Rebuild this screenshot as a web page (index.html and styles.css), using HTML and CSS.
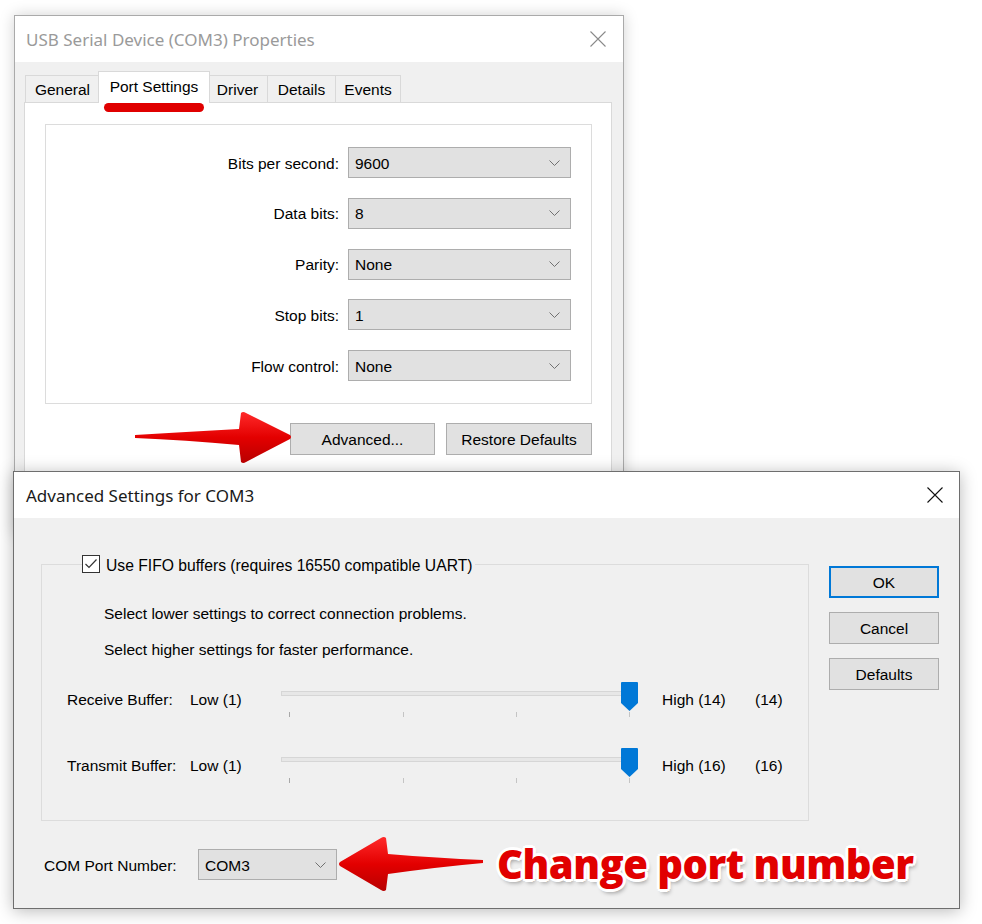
FILE: index.html
```html
<!DOCTYPE html>
<html>
<head>
<meta charset="utf-8">
<link rel="stylesheet" href="styles.css">
</head>
<body>
<div class="desktop">

  <div class="win win-back">
    <div class="titlebar">
      <span class="title title-inactive">USB Serial Device (COM3) Properties</span>
      <svg class="close" width="16" height="16" viewBox="0 0 16 16"><path d="M0.5 0.5 L15.5 15.5 M15.5 0.5 L0.5 15.5" stroke="#8a8a8a" stroke-width="1.1" fill="none"/></svg>
    </div>
    <div class="body1">
      <div class="tabs">
        <div class="tab t-general">General</div>
        <div class="tab t-port selected">Port Settings</div>
        <div class="tab t-driver">Driver</div>
        <div class="tab t-details">Details</div>
        <div class="tab t-events">Events</div>
      </div>
      <div class="panel">
        <div class="group1">
          <label class="lbl">Bits per second:</label>
          <div class="select"><span>9600</span><svg width="11" height="6" viewBox="0 0 11 6"><path d="M0.5 0.5 L5.5 5.5 L10.5 0.5" stroke="#707070" fill="none"/></svg></div>
          <label class="lbl">Data bits:</label>
          <div class="select"><span>8</span><svg width="11" height="6" viewBox="0 0 11 6"><path d="M0.5 0.5 L5.5 5.5 L10.5 0.5" stroke="#707070" fill="none"/></svg></div>
          <label class="lbl">Parity:</label>
          <div class="select"><span>None</span><svg width="11" height="6" viewBox="0 0 11 6"><path d="M0.5 0.5 L5.5 5.5 L10.5 0.5" stroke="#707070" fill="none"/></svg></div>
          <label class="lbl">Stop bits:</label>
          <div class="select"><span>1</span><svg width="11" height="6" viewBox="0 0 11 6"><path d="M0.5 0.5 L5.5 5.5 L10.5 0.5" stroke="#707070" fill="none"/></svg></div>
          <label class="lbl">Flow control:</label>
          <div class="select"><span>None</span><svg width="11" height="6" viewBox="0 0 11 6"><path d="M0.5 0.5 L5.5 5.5 L10.5 0.5" stroke="#707070" fill="none"/></svg></div>
        </div>
        <div class="btnrow">
          <div class="btn b-adv">Advanced...</div>
          <div class="btn b-restore">Restore Defaults</div>
        </div>
      </div>
    </div>
  </div>

  <div class="win win-front">
    <div class="titlebar">
      <span class="title">Advanced Settings for COM3</span>
      <svg class="close" width="16" height="16" viewBox="0 0 16 16"><path d="M0.5 0.5 L15.5 15.5 M15.5 0.5 L0.5 15.5" stroke="#111" stroke-width="1.1" fill="none"/></svg>
    </div>
    <div class="body2">
      <div class="leftcol">
        <fieldset class="fifo">
          <legend class="legend">
            <span class="checkbox"><svg width="18" height="18" viewBox="0 0 18 18"><rect x="0.5" y="0.5" width="17" height="17" fill="#fff" stroke="#333"/><path d="M3.5 9 L7 12.5 L14.5 4.5" stroke="#333" stroke-width="1.2" fill="none"/></svg></span>
            <span>Use FIFO buffers (requires 16550 compatible UART)</span>
          </legend>
          <p class="note n1">Select lower settings to correct connection problems.</p>
          <p class="note n2">Select higher settings for faster performance.</p>
          <div class="srow r1">
            <span class="s-lbl">Receive Buffer:</span>
            <span class="s-low">Low (1)</span>
            <div class="slider">
              <div class="track"></div>
              <i class="tick k1"></i><i class="tick k2"></i><i class="tick k3"></i><i class="tick k4"></i>
              <svg class="thumb" width="17" height="29" viewBox="0 0 17 29"><path d="M1 0 H16 Q17 0 17 1 V21 L8.5 29 L0 21 V1 Q0 0 1 0 Z" fill="#0078d7"/></svg>
            </div>
            <span class="s-high">High (14)</span>
            <span class="s-val">(14)</span>
          </div>
          <div class="srow r2">
            <span class="s-lbl">Transmit Buffer:</span>
            <span class="s-low">Low (1)</span>
            <div class="slider">
              <div class="track"></div>
              <i class="tick k1"></i><i class="tick k2"></i><i class="tick k3"></i><i class="tick k4"></i>
              <svg class="thumb" width="17" height="29" viewBox="0 0 17 29"><path d="M1 0 H16 Q17 0 17 1 V21 L8.5 29 L0 21 V1 Q0 0 1 0 Z" fill="#0078d7"/></svg>
            </div>
            <span class="s-high">High (16)</span>
            <span class="s-val">(16)</span>
          </div>
        </fieldset>
        <div class="comrow">
          <span class="com-lbl">COM Port Number:</span>
          <div class="select com"><span>COM3</span><svg width="11" height="6" viewBox="0 0 11 6"><path d="M0.5 0.5 L5.5 5.5 L10.5 0.5" stroke="#707070" fill="none"/></svg></div>
        </div>
      </div>
      <div class="rightcol">
        <div class="btn b2 ok">OK</div>
        <div class="btn b2">Cancel</div>
        <div class="btn b2">Defaults</div>
      </div>
    </div>
  </div>

  <div class="underline"></div>

  <svg class="arrow arrow1" width="160" height="54" viewBox="0 0 160 54">
    <defs>
      <linearGradient id="ag1" x1="0" y1="0" x2="0" y2="1">
        <stop offset="0" stop-color="#ff2a2a"/>
        <stop offset="0.5" stop-color="#e30000"/>
        <stop offset="1" stop-color="#b80000"/>
      </linearGradient>
    </defs>
    <path d="M0 24 Q50 21 104 18 L106 2 Q108 0 111 2 L155 24 Q157 26 155 28 L111 51 Q108 53 106 51 L104 34 Q50 29 0 27 Z" fill="url(#ag1)"/>
  </svg>

  <svg class="arrow arrow2" width="145" height="56" viewBox="0 0 145 56">
    <defs>
      <linearGradient id="ag2" x1="0" y1="0" x2="0" y2="1">
        <stop offset="0" stop-color="#ff2a2a"/>
        <stop offset="0.5" stop-color="#e30000"/>
        <stop offset="1" stop-color="#b80000"/>
      </linearGradient>
    </defs>
    <path d="M145 24 Q100 22 50 18 L48 2 Q46 0 43 2 L2 26 Q0 28 2 30 L43 54 Q46 56 48 54 L50 38 Q100 31 145 27 Z" fill="url(#ag2)"/>
  </svg>

  <div class="annot">Change port number</div>
</div>
</body>
</html>
```

FILE: styles.css
```css
* { box-sizing: border-box; }
html, body { margin: 0; padding: 0; background: #fff; }
body {
  font-family: "Liberation Sans", Arial, sans-serif;
  font-size: 15.5px;
  color: #000;
}
.desktop {
  position: relative;
  width: 982px;
  height: 924px;
  overflow: hidden;
  background: #fff;
}

/* windows */
.win {
  position: absolute;
  background: #f0f0f0;
  display: flex;
  flex-direction: column;
}
.win-back {
  left: 14px;
  top: 15px;
  width: 610px;
  height: 520px;
  border: 1px solid #aaaaaa;
  box-shadow: 0 0 14px rgba(0,0,0,0.18);
}
.win-front {
  left: 13px;
  top: 471px;
  width: 947px;
  height: 438px;
  border: 1px solid #6e6e6e;
  box-shadow: 0 2px 16px rgba(0,0,0,0.28);
}
.titlebar {
  height: 46px;
  flex: none;
  background: #fff;
  display: flex;
  align-items: center;
  justify-content: space-between;
  padding-left: 11px;
  padding-right: 17px;
}
.win-front .titlebar { padding-left: 12px; padding-right: 16px; }
.title {
  font-family: "Noto Sans", "Open Sans", sans-serif;
  font-size: 17px;
  color: #1a1a1a;
  margin-top: 0;
}
.title-inactive { color: #9a9a9a; }

/* back dialog body */
.body1 {
  padding: 9px 11px 0 9px;
  flex: 1;
  display: flex;
  flex-direction: column;
}
.tabs {
  display: flex;
  align-items: flex-end;
  height: 31px;
  padding-left: 1px;
  position: relative;
  z-index: 2;
}
.tab {
  height: 27px;
  border: 1px solid #d9d9d9;
  border-bottom: none;
  background: #f0f0f0;
  display: flex;
  align-items: center;
  justify-content: center;
  padding-top: 2px;
  margin-left: -1px;
}
.tab:first-child { margin-left: 0; }
.t-general { width: 75px; }
.t-port { width: 112px; }
.t-driver { width: 61px; }
.t-details { width: 69px; }
.t-events { width: 66px; }
.tab.selected {
  height: 32px;
  background: #fff;
  margin-left: -2px;
  margin-right: -2px;
  margin-bottom: -1px;
  padding-top: 0;
  padding-bottom: 2px;
  position: relative;
  z-index: 3;
}
.panel {
  flex: 1;
  background: #fff;
  border: 1px solid #d9d9d9;
  padding: 21px 19px 0 20px;
}
.group1 {
  height: 280px;
  border: 1px solid #dcdcdc;
  display: grid;
  grid-template-columns: 1fr 223px;
  grid-auto-rows: 31px;
  row-gap: 19.75px;
  column-gap: 9px;
  padding: 22px 20px 0 0;
  align-items: center;
}
.lbl { text-align: right; padding-top: 2px; }
.select {
  height: 31px;
  background: #e1e1e1;
  border: 1px solid #adadad;
  display: flex;
  align-items: center;
  justify-content: space-between;
  padding: 2px 10px 0 6px;
}
.select svg { margin-top: -2px; }
.btnrow {
  display: flex;
  justify-content: flex-end;
  gap: 11px;
  margin-top: 19px;
}
.btn {
  height: 32px;
  background: #e1e1e1;
  border: 1px solid #adadad;
  display: flex;
  align-items: center;
  justify-content: center;
  padding-top: 1px;
}
.b-adv { width: 145px; }
.b-restore { width: 146px; }

/* front dialog body */
.body2 {
  flex: 1;
  display: flex;
  padding: 0 19px 0 27px;
  gap: 20px;
}
.leftcol {
  width: 768px;
  display: flex;
  flex-direction: column;
}
.fifo {
  margin: 35px 0 0 0;
  padding: 0 0 33px 0;
  border: 1px solid #dcdcdc;
  height: 268px;
  min-width: 0;
}
.legend {
  margin-left: 40px;
  padding: 0 3px 0 0;
  height: 22px;
  display: flex;
  align-items: center;
  gap: 6px;
  background: #f0f0f0;
  font-size: 15.7px;
}
.legend > span:last-child { padding-top: 3px; }
.checkbox { display: block; width: 18px; height: 18px; }
.checkbox svg { display: block; }
.note {
  margin: 0;
  line-height: 20px;
  padding-left: 62px;
}
.n1 { margin-top: 29px; }
.n2 { margin-top: 16px; }
.srow {
  display: grid;
  grid-template-columns: 123px 91px 381px 93px auto;
  align-items: center;
  height: 40px;
  padding-left: 25px;
}
.r1 { margin-top: 20px; }
.r2 { margin-top: 26px; }
.slider {
  position: relative;
  height: 40px;
}
.track {
  position: absolute;
  left: 0;
  top: 11px;
  width: 356px;
  height: 5px;
  background: #e7e7e7;
  border: 1px solid #d6d6d6;
}
.tick {
  position: absolute;
  top: 32px;
  width: 1px;
  height: 5px;
  background: #c4c4c4;
}
.k1 { left: 8px; background: #a8a8a8; }
.k2 { left: 122px; }
.k3 { left: 235px; }
.k4 { left: 348px; }
.thumb {
  position: absolute;
  left: 340px;
  top: 2px;
}

.comrow {
  display: flex;
  align-items: center;
  margin-top: 28px;
  padding-left: 3px;
}
.com-lbl { width: 154px; padding-top: 2px; }
.select.com { width: 139px; }

.rightcol {
  width: 110px;
  padding-top: 48px;
  display: flex;
  flex-direction: column;
  gap: 14px;
}
.b2 { width: 110px; height: 32px; }
.ok {
  border: 1px solid #0078d7;
  box-shadow: inset 0 0 0 1px #0078d7;
}

/* annotations */
.underline {
  position: absolute;
  left: 104px;
  top: 103px;
  width: 100px;
  height: 9px;
  border-radius: 5px;
  background: #e00000;
}
.arrow { position: absolute; }
.arrow1 { left: 135px; top: 411px; }
.arrow2 { left: 338px; top: 836px; }
.annot {
  position: absolute;
  left: 497px;
  top: 838px;
  font-family: "Open Sans", sans-serif;
  font-weight: 800;
  font-size: 40px;
  line-height: 52px;
  color: #e10000;
  letter-spacing: -0.5px;
  text-shadow:
    3px 0 0 #fff, -3px 0 0 #fff, 0 3px 0 #fff, 0 -3px 0 #fff,
    2px 2px 0 #fff, -2px 2px 0 #fff, 2px -2px 0 #fff, -2px -2px 0 #fff,
    2px 4px 4px rgba(0,0,0,0.35);
}
```
